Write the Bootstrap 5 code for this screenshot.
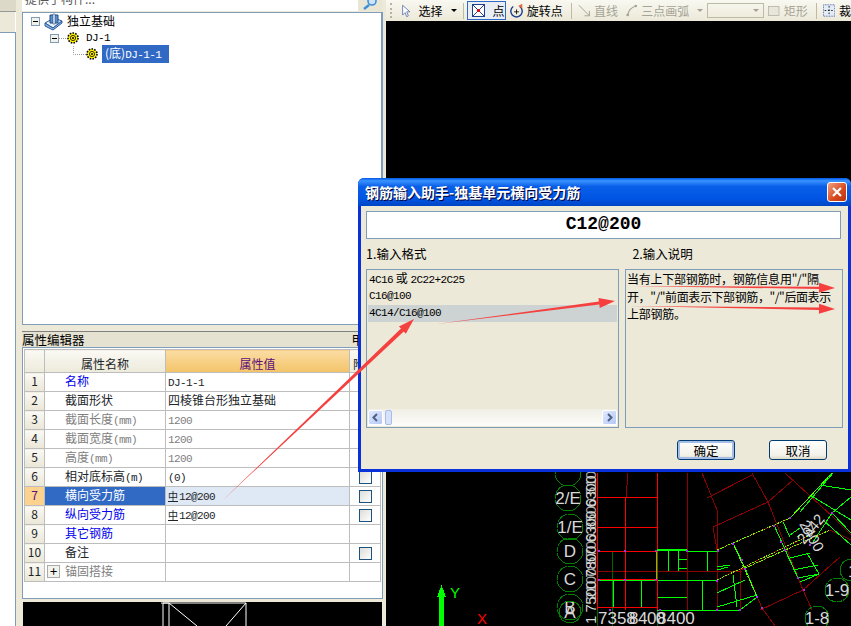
<!DOCTYPE html>
<html lang="zh">
<head>
    <meta charset="UTF-8">
    <title>钢筋输入助手</title>
    <link href="https://cdn.jsdelivr.net/npm/bootstrap@5.3.0/dist/css/bootstrap.min.css" rel="stylesheet">
    <style>
        body { margin: 0; background: #ECE9D8; font: 12px/16px "Noto Sans CJK SC", "Liberation Sans", sans-serif; color: #000; }
        .lat { font-family: "Liberation Mono", monospace; font-size: 11px; letter-spacing: -.6px; }
        .rebar-sym { font-size: 10px; text-decoration: underline; margin-right: 1px; }
        .app-wrap { width: 851px; height: 626px; overflow: hidden; position: relative; background: #ECE9D8; }
        .side-col { width: 16px; flex: none; margin-right: 6px; }
        .side-tab { height: 12px; background: #DDD9C8; border-bottom: 1px solid #999; }
        .side-gap { height: 20px; border-right: 1px solid #fff; }
        .side-list { height: 594px; background: #fff; border-top: 1px solid #7F9DB9; border-right: 1px solid #7F9DB9; }
        .mid-col { width: 361px; flex: none; margin-right: 3px; }
        .search-row { height: 12px; overflow: hidden; border-bottom: 0; }
        .search-box { width: 336px; height: 11px; background: #fff; color: #555; line-height: 11px; padding-left: 3px; overflow: hidden; }
        .search-box span { display: block; margin-top: -7px; }
        .search-btn { width: 24px; height: 11px; background: #E9E6D6; }
        .tree-panel { height: 313px; background: #fff; border: 1px solid #7F9DB9; border-right-width: 2px; padding: 0 0 0 8px; }
        .tree-row { height: 16px; line-height: 16px; }
        .tree-first { height: 17px; }
        .tree-first-text { margin-top: -2px; }
        .tree-box { width: 9px; height: 9px; flex: none; border: 1px solid #7F9DB9; background: #F1F1EA; position: relative; }
        .tree-box::after { content: ""; position: absolute; left: 1px; right: 1px; top: 3px; height: 1px; background: #000; }
        .tree-sel { background: #316AC5; color: #fff; padding: 0 3px; width: 67px; white-space: nowrap; }
        .tree-name { margin-left: 7px; }
        .row-two { padding-left: 19px; }
        .row-three { padding-left: 42px; }
        .prop-title { height: 16px; margin-top: 6px; line-height: 15px; font-size: 12.5px; background: #E5E2D1; border-top: 1px solid #808080; white-space: nowrap; overflow: hidden; }
        .prop-pin { padding-right: 19px; }
        .prop-panel { height: 252px; background: #fff; border: 1px solid #7F9DB9; padding: 1px 2px 0 1px; }
        .prop-table { table-layout: fixed; width: 356px; margin: 0; --bs-border-color: #BDBDBD; font-size: 12px; }
        .prop-table td, .prop-table th { padding: 0; line-height: 17px; font-weight: 400; white-space: nowrap; overflow: hidden; background: transparent; }
        .cell-in { display: block; height: 18px; line-height: 16px; overflow: hidden; position: relative; }
        .prop-table thead th { height: 23px; text-align: center; background: linear-gradient(#FAF9F3, #EDEADB); }
        .prop-table thead th.val-head { background: linear-gradient(#FBDCA4, #F3C468); color: #5B0F7C; }
        .prop-table .num-cell { text-align: center; background: linear-gradient(#FAF9F3, #EAE7D7); }
        .prop-table .cur-num { background: #FBD28E; color: #5B0F7C; }
        .prop-table .name-cell .cell-in { padding-left: 20px; }
        .prop-table .val-cell .cell-in { padding-left: 2px; }
        .prop-table .cur-name { background: #316AC5; color: #fff; }
        .prop-table .cur-val { background: #DFE8F5; }
        .col-num { width: 20px; } .col-name { width: 121px; } .col-val { width: 184px; } .col-chk { width: 31px; }
        .t-blue { color: #0000EE; }
        .t-gray { color: #808080; }
        .plus-box { position: absolute; left: 2px; top: 2px; width: 13px; height: 13px; border: 1px solid #AAA; background: #F3F3EE; line-height: 10px; text-align: center; color: #000; font-size: 13px; }
        .prop-table input.chk-mini[type=checkbox] { width: 13px; height: 13px; margin: 3px 0 0 9px; display: block; border: 1px solid #1C5180; border-radius: 0; background: linear-gradient(135deg, #DCDCD7, #fff); }
        .preview { height: 24px; margin: 3px 1px 0; background: #000; }
        .right-col { width: 465px; flex: none; }
        .tool-bar { height: 21px; background: linear-gradient(#F9F8F1, #ECE9D8); white-space: nowrap; overflow: hidden; line-height: 19px; font-size: 12px; padding-left: 4px; }
        .tool-grip { width: 3px; height: 15px; border-left: 2px dotted #B5B3A5; }
        .tool-sep { width: 1px; height: 16px; background: #BDBAA8; flex: none; }
        .tool-on { background: #E8EDF6; border: 1px solid #316AC5; height: 19px; width: 39px; padding-left: 4px; flex: none; }
        .tool-off { color: #A5A396; }
        .tool-caret { width: 0; height: 0; border: 3px solid transparent; border-top: 3px solid #000; border-bottom: 0; flex: none; }
        .tool-caret.off { border-top-color: #A5A396; }
        .tool-combo { width: 57px; height: 15px; border: 1px solid #BDBAA8; flex: none; }
        .gap-a { margin-left: 6px; }
        .gap-b { margin-left: 3px; }
        .cad-view { display: block; width: 465px; height: 605px; background: #000; shape-rendering: crispEdges; }
        .cad-view text { font-family: "Liberation Sans", sans-serif; fill: #D8D8D8; }
        .dlg { position: absolute; left: 358px; top: 178px; width: 493px; height: 294px; background: #ECE9D8; border: 3px solid #0831D9; border-top: 0; border-radius: 6px 6px 0 0; z-index: 2; }
        .dlg-head { height: 28px; margin: 0 -3px; background: linear-gradient(#0058E6 0%, #3A93FF 10%, #0A5FE8 30%, #0054E3 75%, #0046C4 100%); border-radius: 6px 6px 0 0; padding: 0 4px 0 7px; color: #fff; font-weight: 700; font-size: 14px; text-shadow: 1px 1px 0 #003; white-space: nowrap; }
        .dlg-close { width: 20px; height: 20px; background: linear-gradient(135deg, #F0A080, #D8481C 60%, #B8340C); border: 1px solid #fff; border-radius: 3px; padding: 0; line-height: 0; }
        .dlg-show { height: 28px; margin: 5px 7px 0 5px; border: 1px solid #7F9DB9; background: #fff; text-align: center; font: 700 18px/25px "Liberation Mono", monospace; }
        .dlg-labels { height: 30px; line-height: 16px; padding-top: 7px; padding-left: 5px; font-size: 12.5px; }
        .dlg-label-two { margin-left: 206px; }
        .fmt-box { width: 253px; height: 159px; margin-left: 5px; border: 1px solid #7F9DB9; padding: 1px 1px 1px 1px; position: relative; background: #ECE9D8; }
        .fmt-item { height: 17px; line-height: 17px; padding: 0 1px; background: transparent; border: 0; border-radius: 0 !important; color: #000; overflow: hidden; }
        .fmt-item.top-item { line-height: 14px; }
        .fmt-item.act { background: #CDD2D2; margin-bottom: 0; }
        .fmt-scroll { position: absolute; left: 1px; right: 1px; bottom: 1px; height: 17px; background: linear-gradient(#F0EFE6, #FDFDFA); }
        .scr-btn { width: 15px; height: 15px; margin-top: 1px; background: linear-gradient(135deg, #E1EAFE, #B4C8F6); border: 1px solid #fff; border-radius: 2px; flex: none; padding: 0; line-height: 0; }
        .scr-thumb { width: 7px; height: 15px; margin-top: 1px; background: #D6E2FB; border: 1px solid #A9BCE8; border-radius: 2px; flex: none; margin-left: 2px; }
        .desc-box { width: 218px; height: 159px; margin-left: 6px; border: 1px solid #7F9DB9; padding: 0 0 0 1px; line-height: 17.5px; white-space: nowrap; letter-spacing: -.02em; }
        .desc-tight { letter-spacing: -.4px; }
        .dlg-btn { width: 58px; height: 20px; padding: 0; font-size: 12.5px; line-height: 17px; color: #000; background: linear-gradient(#fff, #F2F1E8 80%, #DDD9C8); border: 1px solid #003C74; border-radius: 3px; }
        .dlg-btn.first { box-shadow: inset 0 0 0 2px #A6BDE8; }
        .dlg-foot { padding: 12px 0 0 316px; gap: 34px; }
        .arrow-layer { position: absolute; left: 0; top: 0; width: 851px; height: 626px; z-index: 3; pointer-events: none; }
    </style>
</head>
<body>
    <svg width="0" height="0" class="position-absolute">
        <symbol id="gear" viewBox="0 0 12 12">
            <circle cx="6" cy="6" r="5" fill="#FFF200" stroke="#000" stroke-width="1.6" stroke-dasharray="1.6 1.2"/>
            <circle cx="6" cy="6" r="2.6" fill="#FFF200" stroke="#000" stroke-width=".8"/>
            <circle cx="6" cy="6" r="1" fill="#000"/>
        </symbol>
    </svg>

    <div class="app-wrap d-flex">
        <div class="side-col">
            <div class="side-tab"></div>
            <div class="side-gap"></div>
            <div class="side-list"></div>
        </div>

        <div class="mid-col">
            <div class="search-row d-flex">
                <div class="search-box"><span>提供了构件...</span></div>
                <div class="search-btn d-flex justify-content-center">
                    <svg width="16" height="11" viewBox="0 0 16 11"><circle cx="10" cy="1" r="4" fill="#CFE3FA" stroke="#3F8FD8" stroke-width="1.6"/><path d="M7 5 2 9" stroke="#3F8FD8" stroke-width="2.4"/></svg>
                </div>
            </div>
            <div class="tree-panel">
                <div class="tree-row tree-first d-flex align-items-center">
                    <span class="tree-box"></span>
                    <svg class="ms-1 me-1" width="19" height="18" viewBox="0 0 19 18">
                        <path d="M1 10 10 5l8 3-9 7z" fill="#E8F1FC" stroke="#2A5C9E"/>
                        <path d="M1 10v3l8 4 9-7V8l-9 7z" fill="#8DB4E2" stroke="#2A5C9E"/>
                        <path d="M6 2h8v8H6z" fill="#5C8FCB" stroke="#1F4B85"/>
                        <path d="M9 1h2v10H9z" fill="#fff" stroke="#1F4B85" stroke-width=".6"/>
                    </svg>
                    <span class="tree-first-text">独立基础</span>
                </div>
                <div class="tree-row row-two d-flex align-items-center">
                    <span class="tree-box"></span>
                    <svg width="8" height="3" viewBox="0 0 8 3"><path d="M0 1.5h8" stroke="#999" stroke-dasharray="1 1"/></svg>
                    <svg width="12" height="12"><use href="#gear"/></svg>
                    <span class="lat tree-name">DJ-1</span>
                </div>
                <div class="tree-row row-three d-flex align-items-center">
                    <svg width="13" height="16" viewBox="0 0 13 16"><path d="M.5 0v8.5H13" fill="none" stroke="#999" stroke-dasharray="1 1"/></svg>
                    <svg width="12" height="12"><use href="#gear"/></svg>
                    <span class="tree-sel ms-1">(底)<span class="lat">DJ-1-1</span></span>
                </div>
            </div>
            <div class="prop-title d-flex justify-content-between">
                <span>属性编辑器</span><span class="prop-pin">甲</span>
            </div>
            <div class="prop-panel">
                <table class="table table-bordered prop-table">
                    <colgroup><col class="col-num"><col class="col-name"><col class="col-val"><col class="col-chk"></colgroup>
                    <thead>
                        <tr><th></th><th>属性名称</th><th class="val-head">属性值</th><th>附加</th></tr>
                    </thead>
                    <tbody id="propRows"></tbody>
                </table>
            </div>
            <div class="preview">
                <svg width="359" height="24" viewBox="0 0 359 24"><path d="M140 1h83v24M140 1v24M146 1v24M146 1l28 23M223 1l-20 23M138 1h8" fill="none" stroke="#fff"/></svg>
            </div>
        </div>

        <div class="right-col">
            <div class="tool-bar d-flex align-items-center">
                <span class="tool-grip me-2"></span>
                <svg width="12" height="16" viewBox="0 0 12 16"><path d="M2 1v12l3-3 2 5 2-1-2-5h4z" fill="#fff" stroke="#5A6FA8"/></svg>
                <span class="ms-2">选择</span>
                <span class="tool-caret ms-2"></span>
                <span class="tool-sep gap-a"></span>
                <span class="tool-on d-flex align-items-center gap-b">
                    <svg width="13" height="13" viewBox="0 0 13 13"><rect x=".5" y=".5" width="12" height="12" fill="#fff" stroke="#1F3F8F"/><path d="M1 1l11 11M12 1 1 12" stroke="#1F3F8F"/><circle cx="6.5" cy="6.5" r="1.6" fill="#E00"/></svg>
                    <span class="ms-2">点</span>
                </span>
                <svg class="ms-1" width="16" height="18" viewBox="0 0 16 18"><path d="M4 3.500a7 7 0 1 0 8 0" fill="none" stroke="#1F3F8F" stroke-width="1.8"/><path d="M8 7v6M5 10h6" stroke="#000"/><path d="M15 0l-5 3 5 3z" fill="#D64"/></svg>
                <span class="ms-1">旋转点</span>
                <span class="tool-sep ms-2"></span>
                <svg class="gap-a tool-off" width="15" height="15" viewBox="0 0 15 15"><path d="M1 1l13 13M14 8v6H8" fill="none" stroke="#A5A396" stroke-width="1.2"/></svg>
                <span class="ms-1 tool-off">直线</span>
                <svg class="ms-2 tool-off" width="14" height="15" viewBox="0 0 14 15"><path d="M2 14C3 7 7 3 13 2" fill="none" stroke="#A5A396" stroke-width="1.4"/><circle cx="2" cy="13" r="1.6" fill="#A5A396"/><circle cx="12" cy="2" r="1.6" fill="#A5A396"/></svg>
                <span class="ms-1 tool-off">三点画弧</span>
                <span class="tool-caret off ms-2"></span>
                <span class="tool-combo ms-1 d-flex align-items-center justify-content-end pe-1"><span class="tool-caret off"></span></span>
                <svg class="ms-1" width="14" height="12" viewBox="0 0 14 12"><rect x=".5" y=".5" width="13" height="11" fill="#E8E6DA" stroke="#B5B3A5"/></svg>
                <span class="ms-1 tool-off">矩形</span>
                <span class="tool-sep ms-2"></span>
                <svg class="gap-a" width="15" height="15" viewBox="0 0 15 15"><rect x=".5" y=".5" width="14" height="14" fill="#E4ECF8" stroke="#1F3F8F" stroke-dasharray="1 1"/><path d="M7.5 2v11M2 7.5h11" stroke="#000" stroke-dasharray="2 2"/></svg>
                <span class="ms-1">裁</span>
            </div>
            <svg class="cad-view" id="cad" viewBox="386 21 465 605"></svg>
        </div>

        <div class="dlg">
            <div class="dlg-head d-flex align-items-center justify-content-between">
                <span>钢筋输入助手-独基单元横向受力筋</span>
                <button class="dlg-close" type="button" aria-label="关闭">
                    <svg width="18" height="18" viewBox="0 0 18 18"><path d="M5 5l8 8M13 5l-8 8" stroke="#fff" stroke-width="2.2"/></svg>
                </button>
            </div>
            <div class="dlg-show">C12@200</div>
            <div class="dlg-labels d-flex">
                <span>1.输入格式</span><span class="dlg-label-two">2.输入说明</span>
            </div>
            <div class="d-flex">
                <div class="fmt-box">
                    <div class="list-group">
                        <div class="list-group-item fmt-item top-item"><span class="lat">4C16</span> 或 <span class="lat">2C22+2C25</span></div>
                        <div class="list-group-item fmt-item lat">C16@100</div>
                        <div class="list-group-item fmt-item act lat">4C14/C16@100</div>
                    </div>
                    <div class="fmt-scroll d-flex">
                        <button class="scr-btn" type="button" aria-label="左"><svg width="13" height="13" viewBox="0 0 13 13"><path d="M8 3 4.500 6.500 8 10" fill="none" stroke="#4D6185" stroke-width="2"/></svg></button>
                        <span class="scr-thumb"></span>
                        <span class="flex-grow-1"></span>
                        <button class="scr-btn" type="button" aria-label="右"><svg width="13" height="13" viewBox="0 0 13 13"><path d="M5 3l3.500 3.500L5 10" fill="none" stroke="#4D6185" stroke-width="2"/></svg></button>
                    </div>
                </div>
                <div class="desc-box">当有上下部钢筋时，钢筋信息用"/"隔<br><span class="desc-tight">开，"/"前面表示下部钢筋，"/"后面表示</span><br>上部钢筋。</div>
            </div>
            <div class="dlg-foot d-flex">
                <button class="btn dlg-btn first" type="button">确定</button>
                <button class="btn dlg-btn" type="button">取消</button>
            </div>
        </div>

        <svg class="arrow-layer" id="arrows" viewBox="0 0 851 626"></svg>
    </div>

    <script>
        const NS = 'http://www.w3.org/2000/svg';
        const rebar = '<span class="rebar-sym">中</span><span class="lat">12@200</span>';

        // property rows: name, value, colour class, has checkbox
        const props = [
            ['名称', '<span class="lat">DJ-1-1</span>', 't-blue', false],
            ['截面形状', '四棱锥台形独立基础', '', false],
            ['截面长度<span class="lat">(mm)</span>', '<span class="lat">1200</span>', 't-gray', false],
            ['截面宽度<span class="lat">(mm)</span>', '<span class="lat">1200</span>', 't-gray', false],
            ['高度<span class="lat">(mm)</span>', '<span class="lat">1200</span>', 't-gray', false],
            ['相对底标高<span class="lat">(m)</span>', '<span class="lat">(0)</span>', '', true],
            ['横向受力筋', rebar, 'cur', true],
            ['纵向受力筋', rebar, 't-blue', true],
            ['其它钢筋', '', 't-blue', false],
            ['备注', '', '', true],
            ['锚固搭接', '', 't-gray', false]
        ];
        document.getElementById('propRows').innerHTML = props.map((p, i) => {
            const cur = p[2] === 'cur';
            const plus = i === 10 ? '<span class="plus-box">+</span>' : '';
            const valClass = cur ? 'cur-val' : (p[2] === 't-gray' ? 't-gray' : '');
            return `<tr>
                <td class="num-cell ${cur ? 'cur-num' : ''}"><span class="cell-in">${i + 1}</span></td>
                <td class="name-cell ${cur ? 'cur-name' : p[2]}"><span class="cell-in">${plus}${p[0]}</span></td>
                <td class="val-cell ${valClass}"><span class="cell-in">${p[1]}</span></td>
                <td><span class="cell-in">${p[3] ? '<input class="form-check-input chk-mini" type="checkbox">' : ''}</span></td>
            </tr>`;
        }).join('');

        // CAD drawing, in page coordinates
        const cad = document.getElementById('cad');
        function add(parent, tag, attrs, text) {
            const el = document.createElementNS(NS, tag);
            Object.entries(attrs).forEach(([k, v]) => el.setAttribute(k, v));
            if (text) el.textContent = text;
            parent.appendChild(el);
            return el;
        }
        function lines(list, stroke, width, dash) {
            list.forEach(pts => {
                const attrs = { points: pts.join(','), fill: 'none', stroke: stroke, 'stroke-width': width };
                if (dash) attrs['stroke-dasharray'] = dash;
                add(cad, 'polyline', attrs);
            });
        }

        lines([
            [702,473,717,510,717,610], [707,498,752,475], [752,473,768,502,803,590,812,610],
            [713,527,768,502,793,480], [713,527,717,550], [785,473,833,517,851,535],
            [717,550,790,518], [760,610,803,590,840,557], [745,568,762,608,775,626],
            [740,610,740,570,745,568], [597,571,742,571], [687,473,687,610], [628,473,626,497],
            [717,580,810,535], [745,568,830,530], [830,530,851,540]
        ], '#8B0000', 1);

        lines([
            [612,552,612,626], [597,580,597,626], [657,610,657,626]
        ], '#006400', 1);

        lines([
            [656,550,656,580], [597,580,717,580], [657,597,687,597],
            [657,610,740,610], [668,550,668,571], [678,550,678,571], [678,559,687,559], [678,568,687,568],
            [613,580,613,607], [641,580,641,607], [702,580,702,610], [687,551,717,551], [707,551,707,571],
            [717,567,730,565], [717,570,728,567], [733,543,745,568,757,597], [717,593,745,580], [717,607,757,595],
            [733,575,737,607], [740,610,757,597], [774,525,798,578], [783,522,790,537], [785,550,798,578],
            [790,558,810,553], [793,570,818,565], [798,578,819,574,800,582], [807,553,819,574],
            [797,537,800,535], [790,535,800,528], [790,518,832,473], [800,512,833,473], [810,495,851,520],
            [820,485,851,490], [832,513,851,533], [823,520,851,545], [813,542,832,513], [832,513,851,497]
        ], '#00FF00', 1);

        lines([[717,550,790,518], [717,580,810,535], [745,568,830,530], [733,543,757,597], [790,518,832,473]], '#6CFF00', 1, '2 1');

        lines([
            [597,497,657,497], [597,527,657,527], [597,551,657,551], [597,579,657,579], [597,607,657,607],
            [597,473,597,609], [625,497,625,610], [657,473,657,610]
        ], '#FF0000', 1);
        add(cad, 'rect', { x: 657, y: 549, width: 30, height: 2, fill: '#00FF00' });

        // purple points
        [[599,551],[625,551],[656,551],[687,551],[599,580],[625,580],[656,580],[718,551],[733,544],[742,560],[745,569],[757,597],[762,608],
         [717,610],[740,610],[774,526],[781,542],[785,550],[790,518],[798,578],[804,590],[810,545],[832,513],[590,566],[717,581],[610,610],[660,610]]
            .forEach(p => add(cad, 'rect', { x: p[0] - 1, y: p[1] - 1, width: 2, height: 2, fill: '#A030E0' }));

        // axis circles with labels
        [[568,473,'',13],[568,498,'2/E',13],[570,527,'1/E',13],[570,551,'D',13],[570,579,'C',13],[570,607,'B',13],[570,612,'A',11],[837,590,'1-9',12],[817,618,'1-8',12],[851,570,'',11]]
            .forEach(c => {
                add(cad, 'circle', { cx: c[0], cy: c[1], r: c[3], fill: 'none', stroke: '#008000', 'stroke-dasharray': '6 .5' });
                if (c[2]) add(cad, 'text', { x: c[0], y: c[1] + 6, 'text-anchor': 'middle', 'font-size': 17 }, c[2]);
            });
        add(cad, 'text', { x: 848, y: 577, 'font-size': 17 }, '1');

        // dimension texts that overlap in the drawing
        add(cad, 'text', { transform: 'translate(596 624) rotate(-90)', 'font-size': 15, 'letter-spacing': '-.5' }, '1 7500 7800 6300 6300 8100 8100');
        add(cad, 'text', { transform: 'translate(596 600) rotate(-90)', 'font-size': 15, 'letter-spacing': '-.5', opacity: .8 }, '2100 5700 8500 5100 8100');
        add(cad, 'text', { x: 598, y: 624, 'font-size': 17 }, '7358');
        add(cad, 'text', { x: 629, y: 624, 'font-size': 17, 'letter-spacing': '-.5' }, '8400');
        add(cad, 'text', { x: 657, y: 624, 'font-size': 17 }, '8400');
        add(cad, 'text', { transform: 'translate(799 524) rotate(60)', 'font-size': 15 }, '2400');
        add(cad, 'text', { transform: 'translate(804 545) rotate(-50)', 'font-size': 15 }, '2942');

        // coordinate axes
        add(cad, 'rect', { x: 439, y: 596, width: 5, height: 30, fill: '#00FF00' });
        add(cad, 'polygon', { points: '441.500,585 437,597 446,597', fill: '#00FF00' });
        add(cad, 'text', { x: 450, y: 598, 'font-size': 15, style: 'fill:#00FF00' }, 'Y');
        add(cad, 'text', { x: 477, y: 624, 'font-size': 15, style: 'fill:#FF0000' }, 'X');

        // red hand drawn arrows
        const arrowLayer = document.getElementById('arrows');
        [[222,501,414,319,16,2], [437,324,615,301,16,1.5], [632,286,835,288,16,1.2], [630,306,835,309,16,1.2]].forEach(a => {
            const [x1, y1, x2, y2, head, shaft] = a;
            const len = Math.hypot(x2 - x1, y2 - y1);
            const ux = (x2 - x1) / len, uy = (y2 - y1) / len;
            const bx = x2 - ux * head, by = y2 - uy * head;
            const pts = [
                [x1, y1],
                [bx - uy * shaft, by + ux * shaft], [bx - uy * 5, by + ux * 5],
                [x2, y2],
                [bx + uy * 5, by - ux * 5], [bx + uy * shaft, by - ux * shaft]
            ];
            const p = document.createElementNS(NS, 'polygon');
            p.setAttribute('points', pts.map(q => q.join(',')).join(' '));
            p.setAttribute('fill', '#F5403F');
            arrowLayer.appendChild(p);
        });
    </script>
    <script src="https://cdn.jsdelivr.net/npm/bootstrap@5.3.0/dist/js/bootstrap.bundle.min.js"></script>
</body>
</html>
